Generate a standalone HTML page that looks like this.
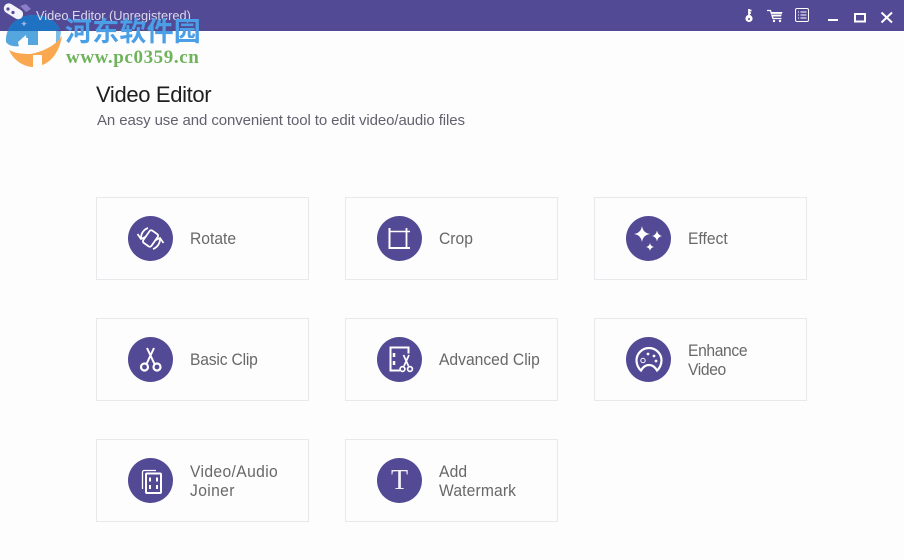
<!DOCTYPE html>
<html><head><meta charset="utf-8">
<style>
html,body{margin:0;padding:0}
body{width:904px;height:560px;background:#fdfdfe;position:relative;overflow:hidden;font-family:"Liberation Sans",sans-serif}
.bar{position:absolute;left:0;top:0;width:904px;height:31px;background:#524a94}
.t{position:absolute;white-space:nowrap}
.card{position:absolute;width:211px;height:81px;border:1px solid #e8e9ec;background:#fdfdfe}
.c{position:absolute;width:45px;height:45px;left:31px;top:18px;border-radius:50%;background:#524a94}
.c svg{position:absolute;left:0;top:0}
.l{position:absolute;left:93px;font-size:17px;line-height:19px;color:#686868;white-space:nowrap;transform:scaleX(.92);transform-origin:0 0}
</style></head><body>
<div class="bar"></div>

<svg style="position:absolute;left:730px;top:0" width="174" height="31" fill="none" stroke="#fff">
<circle cx="19" cy="18.500" r="3.600" fill="#fff" stroke="none"/><circle cx="19" cy="19" r="1" fill="#524a94" stroke="none"/><path d="M19 9v7M19 10.500h2.500M19 13h2" stroke-width="1.800"/>
<path d="M37 10.500h3.500l2.500 8h8.500" stroke-width="1.300"/><path d="M41 12h11.500l-1.500 4.500h-9z" fill="#fff" stroke="none"/><path d="M41.500 14.200h10" stroke="#524a94" stroke-width=".7"/><circle cx="44" cy="21" r="1.200" fill="#fff" stroke="none"/><circle cx="50" cy="21" r="1.200" fill="#fff" stroke="none"/>
<rect x="65.500" y="8.500" width="13" height="13" rx="1.500" stroke-width="1"/><path d="M68 12h1M70.500 12h6M68 15h1M70.500 15h6M68 18h1M70.500 18h6" stroke-width="1"/>
<path d="M98 20h10" stroke-width="2"/>
<rect x="125" y="14" width="10" height="7.500" stroke-width="2"/>
<path d="M151.500 12.500l10.500 10M162 12.500l-10.500 10" stroke-width="2"/>
</svg>

<div class="t" style="left:96px;top:81px;font-size:22px;line-height:27px;color:#1e1e1e;letter-spacing:-.35px">Video Editor</div>
<div class="t" style="left:97px;top:112px;font-size:15px;line-height:18px;color:#62616e;letter-spacing:-.1px">An easy use and convenient tool to edit video/audio files</div>

<div class="card" style="left:96px;top:197px"><div class="c"><svg width="45" height="45" fill="none" stroke="#fff" stroke-width="1.800"><rect x="17.500" y="15" width="10" height="15" rx="2" transform="rotate(35 22.500 22.500)"/><path d="M13 22a10.500 10.500 0 0 1 7-10M32 23a10.500 10.500 0 0 1-7 10"/><path d="M9.500 18l3.500 5 5-2.500M35.500 27l-3.500-5-5 2.500" stroke-width="1.700"/></svg></div><div class="l" style="top:31px">Rotate</div></div>

<div class="card" style="left:345px;top:197px"><div class="c"><svg width="45" height="45" fill="none" stroke="#fff" stroke-width="2"><path d="M12.500 12v20h20.500"/><path d="M13 15.500h20" stroke-width="1.500"/><path d="M29.500 12v20" stroke-width="1.800"/></svg></div><div class="l" style="top:31px">Crop</div></div>

<div class="card" style="left:594px;top:197px"><div class="c"><svg width="45" height="45" fill="#fff"><path d="M16 10Q17 17 24 18Q17 19 16 26Q15 19 8 18Q15 17 16 10z"/><path d="M31 14.500Q31.800 19.200 36 20Q31.800 20.800 31 25.500Q30.200 20.800 26 20Q30.200 19.200 31 14.500z"/><path d="M24 27Q24.600 30.400 28 31Q24.600 31.600 24 35Q23.400 31.600 20 31Q23.400 30.400 24 27z"/></svg></div><div class="l" style="top:31px">Effect</div></div>

<div class="card" style="left:96px;top:318px"><div class="c"><svg width="45" height="45" fill="none" stroke="#fff" stroke-width="2"><path d="M19 11l7.500 16M26 11l-7.500 16"/><circle cx="16.500" cy="30" r="3.500" stroke-width="2.200"/><circle cx="29" cy="30" r="3.500" stroke-width="2.200"/></svg></div><div class="l" style="top:31px;letter-spacing:-.2px">Basic Clip</div></div>

<div class="card" style="left:345px;top:318px"><div class="c"><svg width="45" height="45" fill="none" stroke="#fff" stroke-width="2"><path d="M23 33.500h-9.500v-23h18v6"/><path d="M17 16v4M17 24v4" stroke-width="2.500"/><path d="M26.500 18l5 11M32 18l-5 11" stroke-width="1.700"/><circle cx="25.500" cy="32" r="2.400" stroke-width="1.700"/><circle cx="33" cy="32" r="2.400" stroke-width="1.700"/></svg></div><div class="l" style="top:31px">Advanced Clip</div></div>

<div class="card" style="left:594px;top:318px"><div class="c"><svg width="45" height="45" fill="none" stroke="#fff" stroke-width="2.200"><path d="M15 33.500c-2.500-2-4.500-6-4.500-10a12.500 12.500 0 0 1 25 0c0 4-2 8-4.500 10-2-3.500-5-5.500-8-5.500s-6 2-8 5.500z"/><circle cx="17" cy="23.500" r="2.200" stroke-width="1"/><circle cx="22" cy="17" r="1.400" fill="#fff" stroke="none"/><circle cx="28" cy="19" r="1.400" fill="#fff" stroke="none"/><circle cx="30" cy="24" r="1.400" fill="#fff" stroke="none"/></svg></div><div class="l" style="top:22px;letter-spacing:-.4px">Enhance<br>Video</div></div>

<div class="card" style="left:96px;top:439px"><div class="c"><svg width="45" height="45" fill="none" stroke="#fff" stroke-width="2"><path d="M14.500 31v-17a1.500 1.500 0 0 1 1.500-1.500h12" stroke-width="1.300"/><rect x="18" y="15.500" width="15" height="19.500" rx="1"/><path d="M22 19.500v4M22 27v4M29 19.500v4M29 27v4" stroke-width="2"/></svg></div><div class="l" style="top:22px;letter-spacing:.4px">Video/Audio<br>Joiner</div></div>

<div class="card" style="left:345px;top:439px"><div class="c"><div style="position:absolute;left:0;top:8px;width:45px;text-align:center;font:28px/30px 'Liberation Serif',serif;color:#f4f3fa">T</div></div><div class="l" style="top:22px;letter-spacing:.15px">Add<br>Watermark</div></div>

<svg style="position:absolute;left:0;top:0" width="70" height="70">
<defs><clipPath id="up"><rect x="0" y="0" width="70" height="31"/></clipPath></defs>
<path d="M9 50C14 62 26 67 33 67L33 55L42 55L42 65C52 62 60 50 62 36C55 46 42 52 30 54C22 54 14 53 9 50Z" fill="#f9a84f"/>
<path d="M6 42C5 26 18 15 34 15C46 15 56 21 60 29L55 31L38 31L38 45L28 45L28 38L22 38L22 46C14 47 9 46 6 42Z" fill="#55a6de"/>
<path d="M6 42C5 26 18 15 34 15C46 15 56 21 60 29L55 31L38 31L38 45L28 45L28 38L22 38L22 46C14 47 9 46 6 42Z" fill="#1f72c2" clip-path="url(#up)"/>
<path d="M18 42L26 35L27 47L19 47Z" fill="#fdfdfe"/>
<path d="M56 31h5l-1 8-4 4z" fill="#7bbce6"/>
<rect x="3" y="6" width="21" height="10" rx="5" transform="rotate(32 13 11)" fill="#f4f2fb"/>
<circle cx="8" cy="9" r="1.600" fill="#524a94"/><circle cx="13" cy="12.500" r="1.600" fill="#524a94"/>
<path d="M20 6l6-2 5 5-5 3z" fill="#8a7fc8"/>
<path d="M24 21l1 2 2 .5-2 1-1 2-1-2-2-1 2-.5z" fill="#9fb6e6"/>
</svg>
<div class="t" style="left:36px;top:8px;font-size:12.800px;line-height:15px;color:#dcdaf0">Video Editor (Unregistered)</div>
<div class="t" style="left:65px;top:14px;font:bold 27px/32px 'Noto Sans CJK SC',sans-serif;color:#4a9fe6;letter-spacing:.2px">河东软件园</div>
<div class="t" style="left:66px;top:48px;font:bold 19px/20px 'Liberation Serif',serif;color:#6fb35a;letter-spacing:.6px">www.pc0359.cn</div>
</body></html>
